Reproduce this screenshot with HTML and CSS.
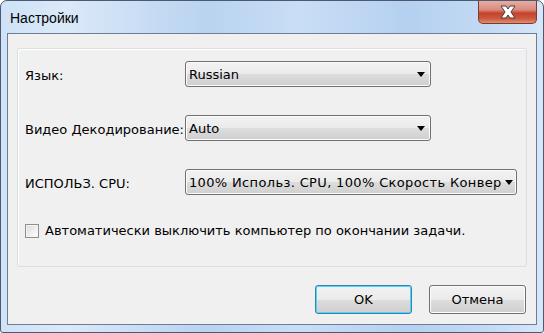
FILE: index.html
```html
<!DOCTYPE html>
<html lang="ru">
  <head>
    <meta charset="UTF-8" />
    <title>Настройки</title>
    <link rel="stylesheet" href="styles.css">
  </head>
  <body>
    <div class="window">
      <div class="titlebar">
        <span class="title">Настройки</span>
        <div class="close-btn">
          <svg width="22" height="16" viewBox="0 0 22 16">
            <path d="M4 2 L9 2 L11 5 L13 2 L18 2 L14 8 L18 14 L13 14 L11 11 L9 14 L4 14 L8 8 Z"
                  fill="#ffffff" stroke="#4a3b3b" stroke-width="1" stroke-linejoin="round" />
          </svg>
        </div>
      </div>

      <div class="client">
        <div class="groupbox">
          <div class="row">
            <label class="label">Язык:</label>
            <div class="combo">
              <span class="combo-text">Russian</span>
              <span class="arrow"></span>
            </div>
          </div>
          <div class="row">
            <label class="label">Видео Декодирование:</label>
            <div class="combo">
              <span class="combo-text">Auto</span>
              <span class="arrow"></span>
            </div>
          </div>
          <div class="row">
            <label class="label">ИСПОЛЬЗ. CPU:</label>
            <div class="combo wide">
              <span class="combo-text">100% Использ. CPU, 100% Скорость Конвертации</span>
              <span class="arrow"></span>
            </div>
          </div>
          <div class="check-row">
            <span class="checkbox"></span>
            <span class="check-label">Автоматически выключить компьютер по окончании задачи.</span>
          </div>
        </div>

        <div class="buttons">
          <div class="btn default">OK</div>
          <div class="btn">Отмена</div>
        </div>
      </div>
    </div>
  </body>
</html>
```

FILE: styles.css
```css
body {
  margin: 0;
  padding: 0;
  background: #ffffff;
  font-family: "DejaVu Sans", sans-serif;
}

.window {
  box-sizing: border-box;
  width: 544px;
  height: 333px;
  display: flex;
  flex-direction: column;
  padding: 0 6px 7px 6px;
  border: 1px solid #4b5a70;
  border-radius: 7px 7px 3px 3px;
  background: linear-gradient(to right, #cfe2f7 0%, #dbe9f9 12%, #b9d3f0 38%, #c9def6 55%, #b5d0f0 75%, #c3daf4 90%, #d6e7f9 100%);
}

.titlebar {
  height: 32px;
  display: flex;
  align-items: flex-start;
}

.title {
  font-family: "Liberation Sans", sans-serif;
  font-size: 14px;
  color: #000000;
  margin: 9px 0 0 3px;
}

.close-btn {
  margin-left: auto;
  margin-right: 0;
  width: 59px;
  height: 23px;
  box-sizing: border-box;
  border: 1px solid #7a3b33;
  border-top: none;
  border-radius: 0 0 5px 5px;
  background: linear-gradient(to bottom, #e6ada2 0%, #d98c7e 40%, #c4422b 55%, #cc5a3f 80%, #e0906f 100%);
  display: flex;
  align-items: center;
  justify-content: center;
}

.client {
  flex: 1;
  display: flex;
  flex-direction: column;
  border: 1px solid #6d7d93;
  background: #f0f0f0;
}

.groupbox {
  margin: 14px 9px 0 9px;
  height: 219px;
  box-sizing: border-box;
  border: 1px solid #d5dfe5;
  border-radius: 3px;
  box-shadow: inset 1px 1px 0 #ffffff;
  padding: 12px 0 0 7px;
}

.row {
  display: flex;
  align-items: center;
  height: 26px;
  margin-bottom: 28px;
}

.label {
  width: 160px;
  font-size: 13px;
  color: #000000;
  padding-top: 2px;
}

.combo {
  box-sizing: border-box;
  width: 246px;
  height: 26px;
  border: 1px solid #707070;
  border-radius: 3px;
  background: linear-gradient(to bottom, #f2f2f2 0%, #ebebeb 50%, #dddddd 51%, #cfcfcf 100%);
  box-shadow: inset 0 0 0 1px #fcfcfc;
  display: flex;
  align-items: center;
  padding: 0 5px 0 3px;
  overflow: hidden;
}

.combo.wide {
  width: 332px;
  padding-right: 3px;
}

.combo-text {
  flex: 1;
  font-size: 13px;
  white-space: nowrap;
  overflow: hidden;
  padding-top: 1px;
}

.combo.wide .combo-text {
  letter-spacing: 0.35px;
}

.arrow {
  width: 0;
  height: 0;
  border-left: 4.5px solid transparent;
  border-right: 4.5px solid transparent;
  border-top: 5px solid #000000;
  margin-left: 3px;
}

.combo.wide .arrow {
  margin-left: 4px;
}

.check-row {
  display: flex;
  align-items: center;
  margin-top: 13px;
}

.checkbox {
  box-sizing: border-box;
  width: 14px;
  height: 14px;
  border: 1px solid #8e8f8f;
  background: linear-gradient(135deg, #dcdcdc 0%, #f4f4f4 70%, #ffffff 100%);
  box-shadow: inset 0 0 0 1px #f4f4f4;
  margin-right: 6px;
}

.check-label {
  font-size: 13px;
  color: #000000;
}

.buttons {
  display: flex;
  justify-content: flex-end;
  gap: 17px;
  margin: 18px 10px 0 0;
}

.btn {
  box-sizing: border-box;
  width: 97px;
  height: 29px;
  border: 1px solid #707070;
  border-radius: 3px;
  background: linear-gradient(to bottom, #f2f2f2 0%, #ebebeb 50%, #dddddd 51%, #cfcfcf 100%);
  box-shadow: inset 0 0 0 1px #fcfcfc;
  display: flex;
  align-items: center;
  justify-content: center;
  font-size: 13px;
}

.btn.default {
  border-color: #3c7fb1;
  box-shadow: inset 0 0 0 1px #48d8fb;
}
```
